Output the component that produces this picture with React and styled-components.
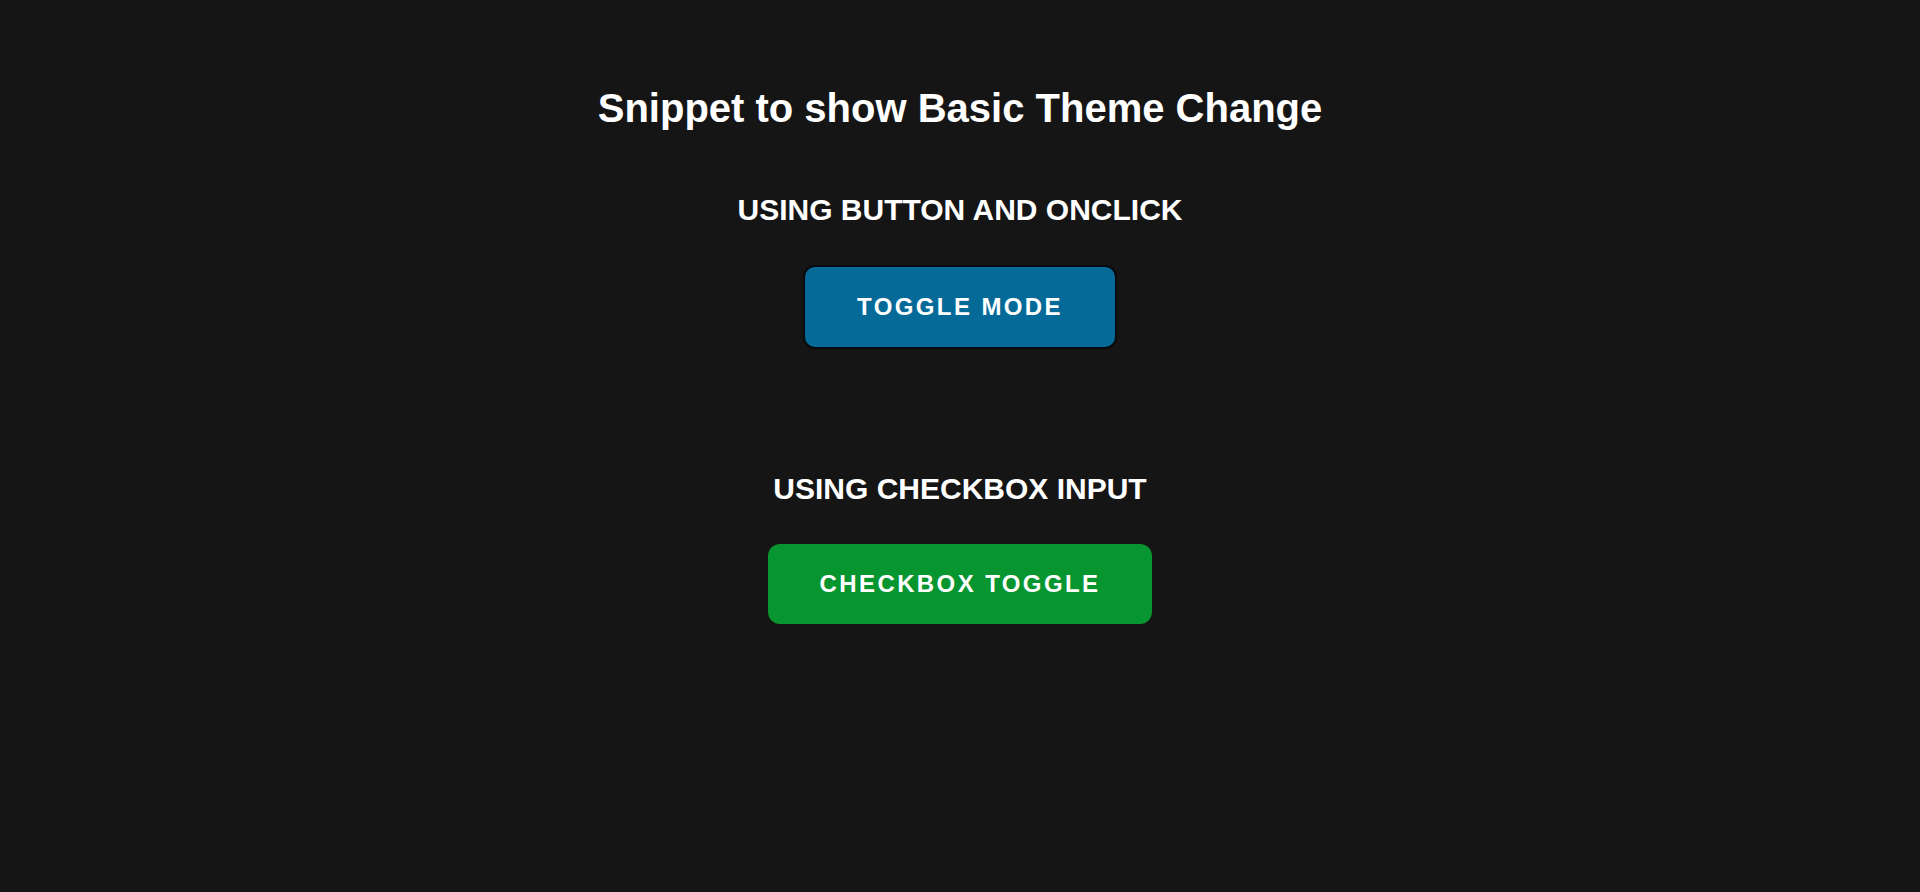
import React, { useState } from 'react';
import styled, { createGlobalStyle } from 'styled-components';

const GlobalStyle = createGlobalStyle`
  html, body {
    margin: 0;
    padding: 0;
    background-color: #151515;
  }

  body {
    font-family: 'Liberation Sans', Arial, sans-serif;
    color: #fff;
  }
`;

const Page = styled.div`
  min-height: 100vh;
  display: flex;
  flex-direction: column;
  align-items: center;
  padding-top: 86px;
  box-sizing: border-box;
`;

const Title = styled.h1`
  margin: 0 0 62px;
  font-size: 40px;
  font-weight: 700;
  line-height: normal;
`;

const Section = styled.section`
  display: flex;
  flex-direction: column;
  align-items: center;
  gap: 38px;
  margin-bottom: 123px;
`;

const Heading = styled.h2`
  margin: 0;
  font-size: 30px;
  font-weight: 700;
  line-height: normal;
  text-transform: uppercase;
`;

const Button = styled.button`
  display: inline-block;
  font-family: 'Liberation Sans', Arial, sans-serif;
  font-size: 24px;
  font-weight: 700;
  line-height: normal;
  letter-spacing: 0.1em;
  text-transform: uppercase;
  color: #fff;
  background-color: ${(p) => p.$bg};
  border: ${(p) => (p.$border ? '2px solid #080b0e' : 'none')};
  border-radius: 12px;
  padding: 26px 52px;
  cursor: pointer;
`;

const HiddenCheck = styled.input`
  display: none;
`;

const App = () => {
  const [dark, setDark] = useState(true);

  return (
    <>
      <GlobalStyle />
      <Page>
        <Title>Snippet to show Basic Theme Change</Title>

        <Section>
          <Heading>Using button and onclick</Heading>
          <Button $bg="#066a99" $border onClick={() => setDark(!dark)}>
            Toggle mode
          </Button>
        </Section>

        <Section>
          <Heading>Using checkbox input</Heading>
          <label>
            <HiddenCheck
              type="checkbox"
              checked={dark}
              onChange={() => setDark(!dark)}
            />
            <Button as="span" $bg="#07952f">
              Checkbox toggle
            </Button>
          </label>
        </Section>
      </Page>
    </>
  );
};

export default App;
